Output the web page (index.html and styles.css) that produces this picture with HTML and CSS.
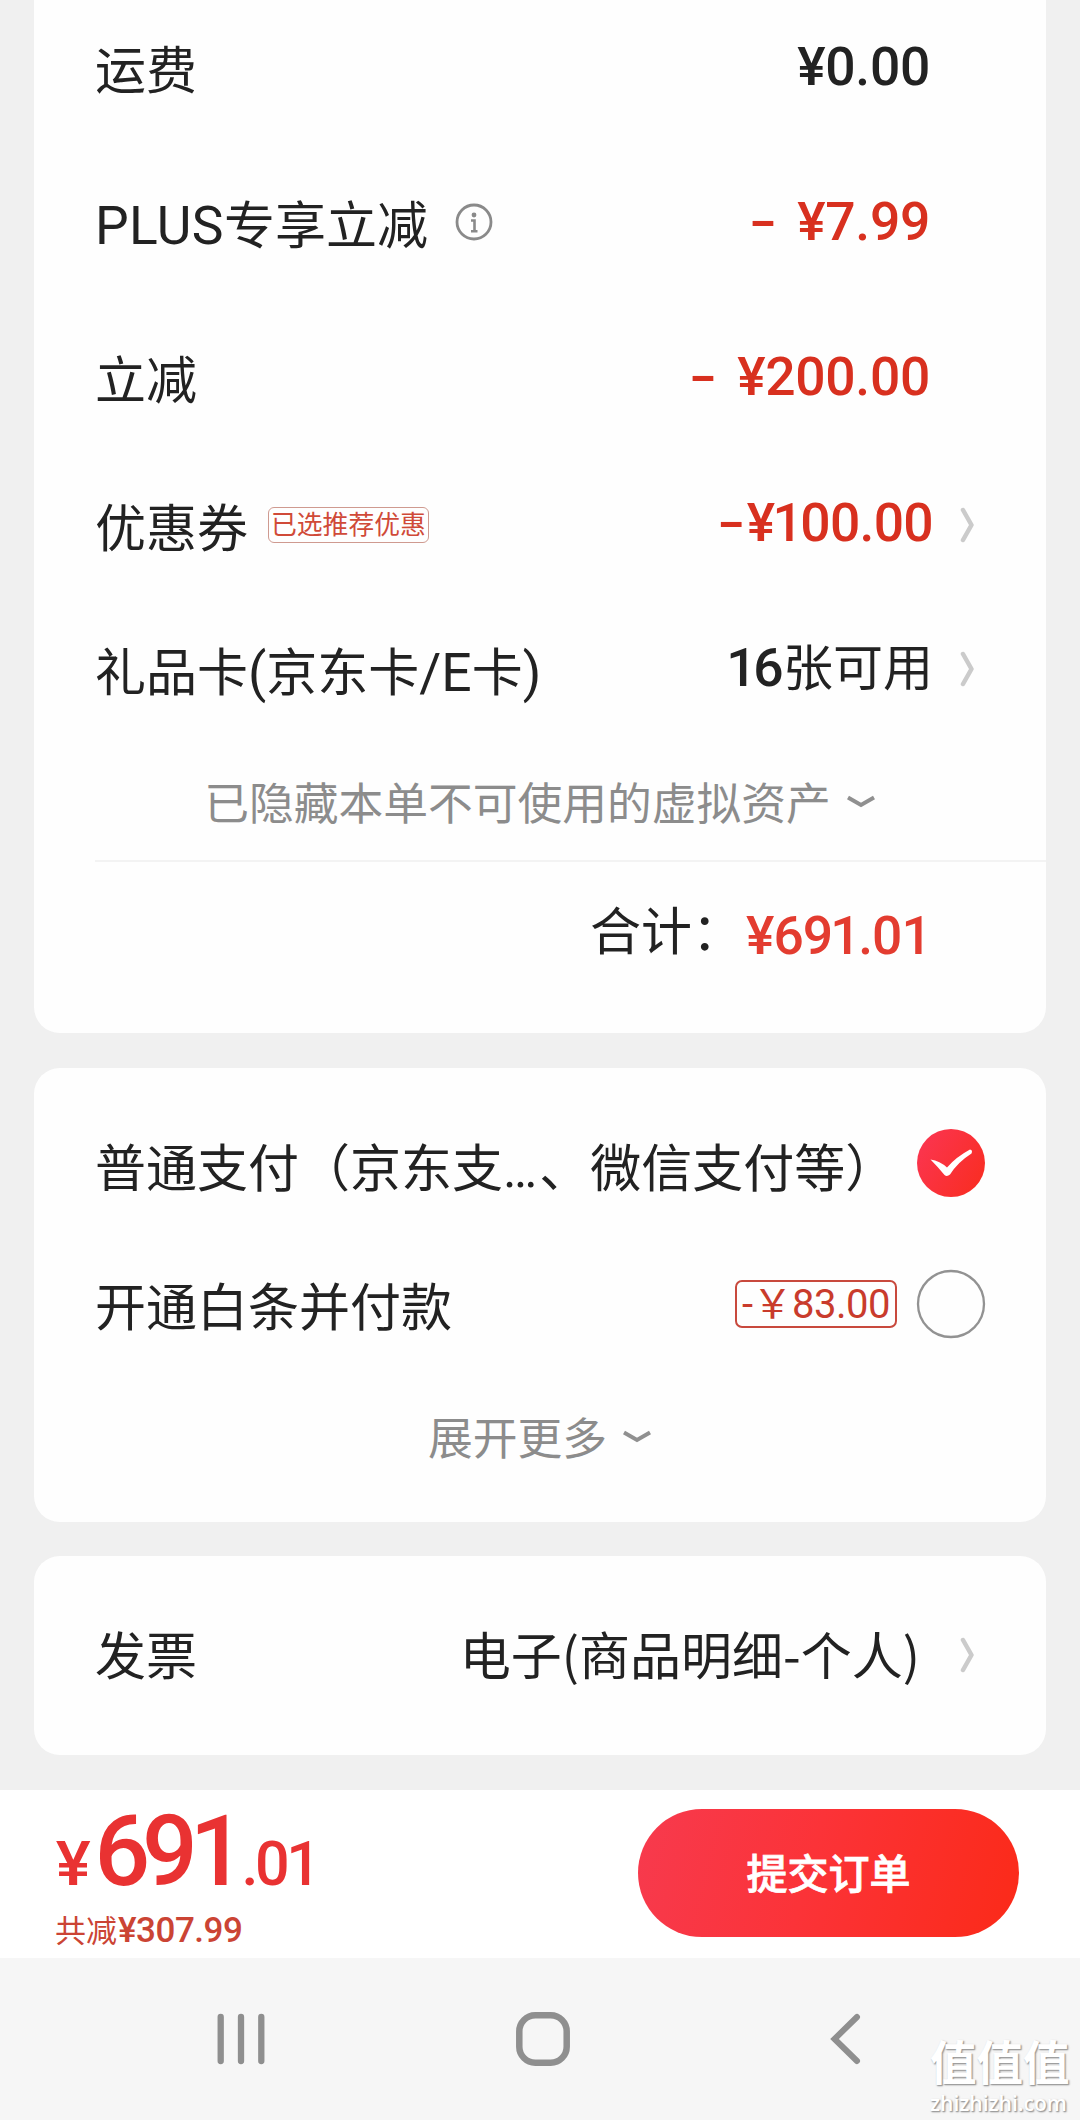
FILE: index.html
```html
<!DOCTYPE html>
<html lang="zh-CN">
<head>
<meta charset="utf-8">
<title>提交订单</title>
<link rel="stylesheet" href="styles.css">
</head>
<body>
<main class="content">
  <section class="card card-fees">
    <div class="row row-shipping">
      <span class="label">运费</span>
      <span class="price">¥0.00</span>
    </div>
    <div class="row row-discount">
      <span class="label"><span class="latin">PLUS</span>专享立减</span>
      <svg class="info" width="38" height="38" viewBox="0 0 38 38" fill="none" stroke="#8a8a8a">
        <circle cx="19" cy="19" r="17" stroke-width="2.8"/>
        <circle cx="19" cy="12" r="2.4" fill="#8a8a8a" stroke="none"/>
        <path d="M16 17.5h3.5v10.5M16 28.3h6.5" stroke-width="2.6"/>
      </svg>
      <span class="price red"><span class="minus spaced">-</span>¥7.99</span>
    </div>
    <div class="row row-discount">
      <span class="label">立减</span>
      <span class="price red"><span class="minus spaced">-</span>¥200.00</span>
    </div>
    <div class="row row-coupon">
      <span class="label">优惠券</span>
      <span class="tag">已选推荐优惠</span>
      <span class="price red"><span class="minus">-</span>¥<span class="one">1</span>00.00</span>
      <svg class="arrow" width="16" height="36" viewBox="0 0 16 36"><path d="M3 3l8.500 15L3 33"/></svg>
    </div>
    <div class="row row-giftcard">
      <span class="label">礼品卡<span class="latin">(</span>京东卡<span class="latin">/E</span>卡<span class="latin">)</span></span>
      <span class="value"><span class="count">16</span>张可用</span>
      <svg class="arrow" width="16" height="36" viewBox="0 0 16 36"><path d="M3 3l8.500 15L3 33"/></svg>
    </div>
    <div class="more more-assets">
      <span>已隐藏本单不可使用的虚拟资产</span>
      <svg class="down" width="30" height="16" viewBox="0 0 30 16"><path d="M2 3.500l13 7.500 13-7.500"/></svg>
    </div>
    <div class="row row-total">
      <span class="label">合计：</span>
      <span class="price">¥69<span class="one">1</span>.01</span>
    </div>
  </section>

  <section class="card card-pay">
    <div class="row row-pay">
      <span class="label">普通支付（京东支<span class="dots">…</span>、微信支付等）</span>
      <svg class="radio" width="70" height="70" viewBox="0 0 70 70">
        <defs><linearGradient id="g" x1="0" y1="0.2" x2="1" y2="0.8"><stop offset="0" stop-color="#fb3550"/><stop offset="1" stop-color="#f92d22"/></linearGradient></defs>
        <circle cx="35" cy="35" r="34" fill="url(#g)"/>
        <path d="M14.500 31.500Q24 33 31 39.500Q40 29 54 21.500Q57 22 55.500 25.500Q42 34 34 46.500Q31 49 28.500 47Q21.500 38.500 14.500 31.500Z" fill="#fff"/>
      </svg>
    </div>
    <div class="row row-credit">
      <span class="label">开通白条并付款</span>
      <span class="saving">-￥83.00</span>
      <svg class="radio" width="70" height="70" viewBox="0 0 70 70"><circle cx="35" cy="35" r="33" fill="none" stroke="#929292" stroke-width="2.300"/></svg>
    </div>
    <div class="more more-pay">
      <span>展开更多</span>
      <svg class="down" width="30" height="16" viewBox="0 0 30 16"><path d="M2 3.500l13 7.500 13-7.500"/></svg>
    </div>
  </section>

  <section class="card card-invoice">
    <div class="row row-invoice">
      <span class="label">发票</span>
      <span class="value">电子(商品明细-个人)</span>
      <svg class="arrow" width="16" height="36" viewBox="0 0 16 36"><path d="M3 3l8.500 15L3 33"/></svg>
    </div>
  </section>
</main>

<footer class="bar">
  <div class="sum">
    <div class="amount"><span class="yen">¥</span><span class="int">691</span><span class="dec">.01</span></div>
    <div class="saved">共减<span class="saved-num">¥307.99</span></div>
  </div>
  <button class="submit" type="button">提交订单</button>
</footer>

<nav class="nav">
  <svg width="52" height="56" viewBox="0 0 52 56" stroke="#8f8f8f" stroke-width="6.300" stroke-linecap="round"><path d="M5.700 6v44M26 6v44M46.300 6v44"/></svg>
  <svg class="home" width="56" height="56" viewBox="0 0 56 56" fill="none" stroke="#8f8f8f" stroke-width="6.500"><rect x="4.300" y="4.300" width="47.400" height="47.400" rx="16"/></svg>
  <svg width="32" height="56" viewBox="0 0 32 56" fill="none" stroke="#8f8f8f" stroke-width="6" stroke-linecap="round"><path d="M27 6L4.500 28L27 50"/></svg>
  <div class="mark">
    <span class="mark-name">值值值</span>
    <span class="mark-url">zhizhizhi.com</span>
  </div>
</nav>
</body>
</html>
```
FILE: styles.css
```css
* { box-sizing: border-box; }

body {
  margin: 0;
  width: 1080px;
  height: 2120px;
  overflow: hidden;
  background: #f0f0f0;
  color: #222;
  font: 400 51px "Noto Sans CJK SC", sans-serif;
  display: flex;
  flex-direction: column;
}

svg { display: block; flex: none; }

.content {
  height: 1790px;
  padding: 0 34px;
  display: flex;
  flex-direction: column;
}

.card { background: #fefefe; border-radius: 26px; }
.card-fees { height: 1033px; border-radius: 0 0 26px 26px; }
.card-pay { height: 454px; margin-top: 35px; padding-top: 27px; }
.card-invoice { height: 199px; margin-top: 34px; }

.row {
  display: flex;
  align-items: center;
  padding: 0 117px 0 61px;
  line-height: 70px;
  white-space: nowrap;
}
.row-shipping { height: 133px; }
.row-discount { height: 155px; }
.row-shipping + .row-discount { margin-top: 11px; }
.row-coupon { height: 141px; padding-right: 70px; }
.row-giftcard { height: 148px; padding-right: 70px; }
.row-total {
  height: 134px;
  margin-left: 61px;
  padding-left: 0;
  padding-right: 116px;
  border-top: 2px solid #f3f3f3;
  justify-content: flex-end;
}
.row-pay { height: 140px; padding-right: 60px; }
.row-credit { height: 138px; padding-right: 60px; }
.row-invoice { height: 197px; padding-right: 70px; }

.latin { font: 400 53.4px/1 Roboto, sans-serif; }
.row-discount .latin { letter-spacing: 0.4px; }

.price {
  margin-left: auto;
  font: 500 53.4px/70px Roboto, sans-serif;
  letter-spacing: -0.3px;
  margin-right: -1px;
}
.red { color: #d8301f; }
.minus { display: inline-block; transform: scaleX(1.5); margin-right: 8px; }
.spaced { margin-right: 25px; }
.one { margin-left: -2px; letter-spacing: -2.5px; }
.row-coupon .price { padding-bottom: 4px; letter-spacing: -0.7px; }
.row-coupon .minus { margin-right: 7px; }
.row-coupon .arrow { margin-left: 28px; }
.row-total .label { margin-right: 3px; }
.row-total .price { margin-left: 0; padding-top: 16px; color: #e33c30; letter-spacing: -0.9px; }

.info { margin-left: 27px; }
.value { margin-left: auto; }
.row-giftcard .value { font-size: 50px; padding-bottom: 11px; }
.count { font: 500 53.4px/1 Roboto, sans-serif; letter-spacing: -3.5px; margin-right: 3px; }

.tag {
  height: 36px;
  margin-left: 20px;
  padding: 0 2px;
  border: 1.5px solid #cf9a90;
  border-radius: 6px;
  color: #d04a38;
  font-size: 25.8px;
  line-height: 30px;
}

.arrow { margin-left: 27px; fill: none; stroke: #cbcbcb; stroke-width: 4.5; stroke-linecap: round; stroke-linejoin: round; }
.down { margin-left: 15px; fill: none; stroke: #909090; stroke-width: 4; }

.more {
  display: flex;
  align-items: center;
  justify-content: center;
  color: #8c8c8c;
  font-size: 44.75px;
  line-height: 60px;
  white-space: nowrap;
}
.more-assets { height: 117px; padding-bottom: 2px; }
.more-assets .down, .more-pay .down { margin-top: 2px; }
.more-pay { height: 125px; }

.dots { font-family: Roboto, sans-serif; letter-spacing: 2px; }
.row-pay .label { padding-top: 4px; }
.radio { margin-left: auto; }
.row-pay .radio { margin-bottom: 4px; }
.saving {
  width: 162px;
  height: 48px;
  margin-left: auto;
  border: 2px solid #c8493d;
  border-radius: 7px;
  color: #c93b2c;
  font: 400 40px/45px Roboto, "Noto Sans CJK SC", sans-serif;
  text-align: center;
  letter-spacing: -0.5px;
}
.saving + .radio { margin-left: 19px; }
.row-invoice .label,
.row-invoice .value { padding-bottom: 4px; }
.row-invoice .arrow { margin-left: 40px; }

.bar {
  height: 168px;
  padding: 0 61px 0 55px;
  background: #fff;
  display: flex;
  align-items: center;
  justify-content: space-between;
}
.sum { height: 168px; }
.amount {
  height: 116px;
  padding-top: 12px;
  color: #e93232;
  font: 500 61px/100px Roboto, sans-serif;
  white-space: nowrap;
}
.yen { display: inline-block; transform: scaleX(1.08); margin-left: 2px; }
.int { font-size: 98px; letter-spacing: -8px; margin-left: 5px; }
.dec { letter-spacing: -3.5px; margin-left: 4px; }
.saved { color: #cb4434; font-size: 31px; line-height: 45px; }
.saved-num { font: 500 35px/1 Roboto, sans-serif; letter-spacing: -0.5px; margin-left: 1px; }
.submit {
  width: 381px;
  height: 128px;
  margin-bottom: 2px;
  padding: 0 0 4px;
  border: 0;
  border-radius: 64px;
  background: linear-gradient(105deg, #f73a4e, #fb3338 45%, #fb2a18);
  color: #fff;
  font: 500 41px "Noto Sans CJK SC", sans-serif;
  -webkit-text-stroke: 0.8px #fff;
}

.nav {
  position: relative;
  height: 162px;
  padding: 0 218px 0 215px;
  background: #f6f6f6;
  display: flex;
  align-items: center;
  justify-content: space-between;
}
.home { margin-right: 11px; }
.mark {
  position: absolute;
  right: 8px;
  bottom: 3px;
  width: 142px;
  display: flex;
  flex-direction: column;
  color: #fff;
  text-shadow: 1px 1px 2px #999, 1px 1px 1px #aaa;
  white-space: nowrap;
}
.mark-name { font-size: 46.5px; font-weight: 700; line-height: 58px; }
.mark-url { font: 600 21px/28px "Open Sans", sans-serif; }
```
